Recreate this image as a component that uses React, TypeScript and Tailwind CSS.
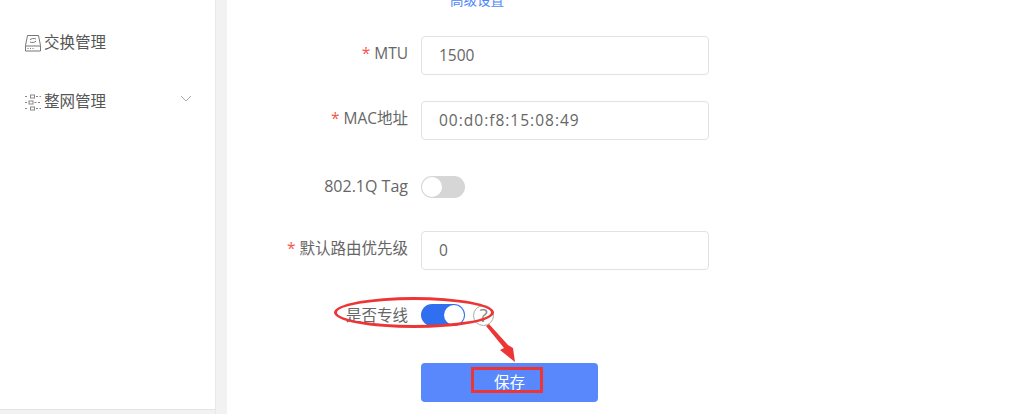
import type { ReactNode } from "react";

function FieldRow({ label, required, low, children }: { label: string; required?: boolean; low?: boolean; children: ReactNode }) {
    return (
        <div className="flex items-center h-[39px] mb-[26px]">
            <label className={low ? "w-[181px] mr-[13px] text-right text-[16px] text-[#666] mt-[0px] whitespace-nowrap" : "w-[181px] mr-[13px] text-right text-[15.5px] text-[#666] -mt-[3px] whitespace-nowrap"}>
                {required && <span className="text-[#f5574c] mr-[4px]">*</span>}
                {label}
            </label>
            {children}
        </div>
    );
}

function TextField({ value, wide }: { value: string; wide?: boolean }) {
    return (
        <div className={wide ? "w-[288px] h-[39px] border border-[#e2e2e2] rounded-[4px] pl-[17px] flex items-center text-[15.5px] text-[#666] tracking-[1px]" : "w-[288px] h-[39px] border border-[#e2e2e2] rounded-[4px] pl-[17px] flex items-center text-[15.5px] text-[#666]"}>
            {value}
        </div>
    );
}

function Toggle({ on }: { on?: boolean }) {
    return (
        <div className={on ? "w-[44px] h-[22px] rounded-full bg-[#2f6ff0] flex items-center justify-end pr-[1px] -mt-[1px]" : "w-[44px] h-[22px] rounded-full bg-[#d6d6d6] flex items-center pl-[1px] mt-[2px]"}>
            <div className="w-[20px] h-[20px] rounded-full bg-white" />
        </div>
    );
}

export default function App() {
    return (
        <div className="flex w-[1024px] h-[414px] overflow-hidden bg-white font-['Open_Sans','Noto_Sans_CJK_SC',sans-serif]">
            <aside className="w-[216px] h-full shrink-0 flex flex-col border-r border-[#e8e8e8] bg-white">
                <div className="flex-1 pl-[25px] text-[15.5px] text-[#555]">
                    <div className="flex items-center h-[20px] mt-[33px] gap-[3px]">
                        <svg width="16" height="17" viewBox="0 0 16 17" fill="none" stroke="#777" strokeWidth="1">
                            <path d="M2.500 .5h11l2 10v5.500h-15v-5.500z" />
                            <path d="M.5 11h15" />
                            <path d="M5 5c.5-1.500 4-2 6-1M11 6c-1 1.500-4 2-6 1" />
                            <path d="M2.500 13.500h1M5 13.500h1M7.500 13.500h1" />
                        </svg>
                        交换管理
                    </div>
                    <div className="flex items-center h-[20px] mt-[39px] gap-[3px]">
                        <svg width="16" height="17" viewBox="0 0 16 17" fill="none" stroke="#888" strokeWidth="1">
                            <path d="M0 2.500h3.500M11 2.500h5M0 8.500h2.500M9.500 8.500h6.500M0 14.500h3.500M11 14.500h5" strokeDasharray="2 1.500" />
                            <rect x="5.500" y="1" width="4" height="3" />
                            <rect x="4" y="7" width="4" height="3" />
                            <rect x="5.500" y="13" width="4" height="3" />
                        </svg>
                        <span className="flex-1">整网管理</span>
                        <svg className="mr-[23px] -mt-[7px]" width="12" height="8" viewBox="0 0 12 8" fill="none" stroke="#aaa" strokeWidth="1">
                            <path d="M1 1l5 5 5-5" />
                        </svg>
                    </div>
                </div>
                <div className="h-[5px] border-t border-[#e4e4e4] bg-[#f2f2f2]" />
            </aside>
            <div className="w-[11px] h-full shrink-0 bg-[#f2f2f2]" />
            <main className="relative flex-1">
                <div className="h-[36px] pl-[223px] overflow-hidden">
                    <a className="block -mt-[10px] text-[13.500px] leading-[20px] text-[#4d84fb]">高级设置</a>
                </div>
                <FieldRow label="MTU" required><TextField value="1500" /></FieldRow>
                <FieldRow label="MAC地址" required><TextField value="00:d0:f8:15:08:49" wide /></FieldRow>
                <FieldRow label="802.1Q Tag" low><Toggle /></FieldRow>
                <FieldRow label="默认路由优先级" required><TextField value="0" /></FieldRow>
                <div className="flex items-center h-[39px] mb-[28px]">
                    <label className="w-[181px] mr-[13px] text-right text-[15.5px] text-[#666]">是否专线</label>
                    <Toggle on />
                    <span className="ml-[8px] w-[21px] h-[21px] rounded-full border-[1.5px] border-[#aaa] flex items-center justify-center text-[19px] leading-none text-[#888]">?</span>
                </div>
                <button className="block ml-[194px] w-[177px] h-[39px] rounded-[4px] bg-[#5888fc] text-[15.5px] text-white">保存</button>

                {/* hand drawn markup on top of the screenshot */}
                <div className="absolute left-[107px] top-[297px] w-[160px] h-[31px] border-[3px] border-[#ee3535] rounded-[50%]" />
                <svg className="absolute left-[255px] top-[320px]" width="50" height="46" viewBox="0 0 50 46">
                    <path d="M4 6L7 4L26 25L31 28L33 42L18 30L22 28z" fill="#ee3535" />
                </svg>
                <div className="absolute left-[244px] top-[367px] w-[72px] h-[26px] border-[3px] border-[#ee3535]" />
            </main>
        </div>
    );
}
